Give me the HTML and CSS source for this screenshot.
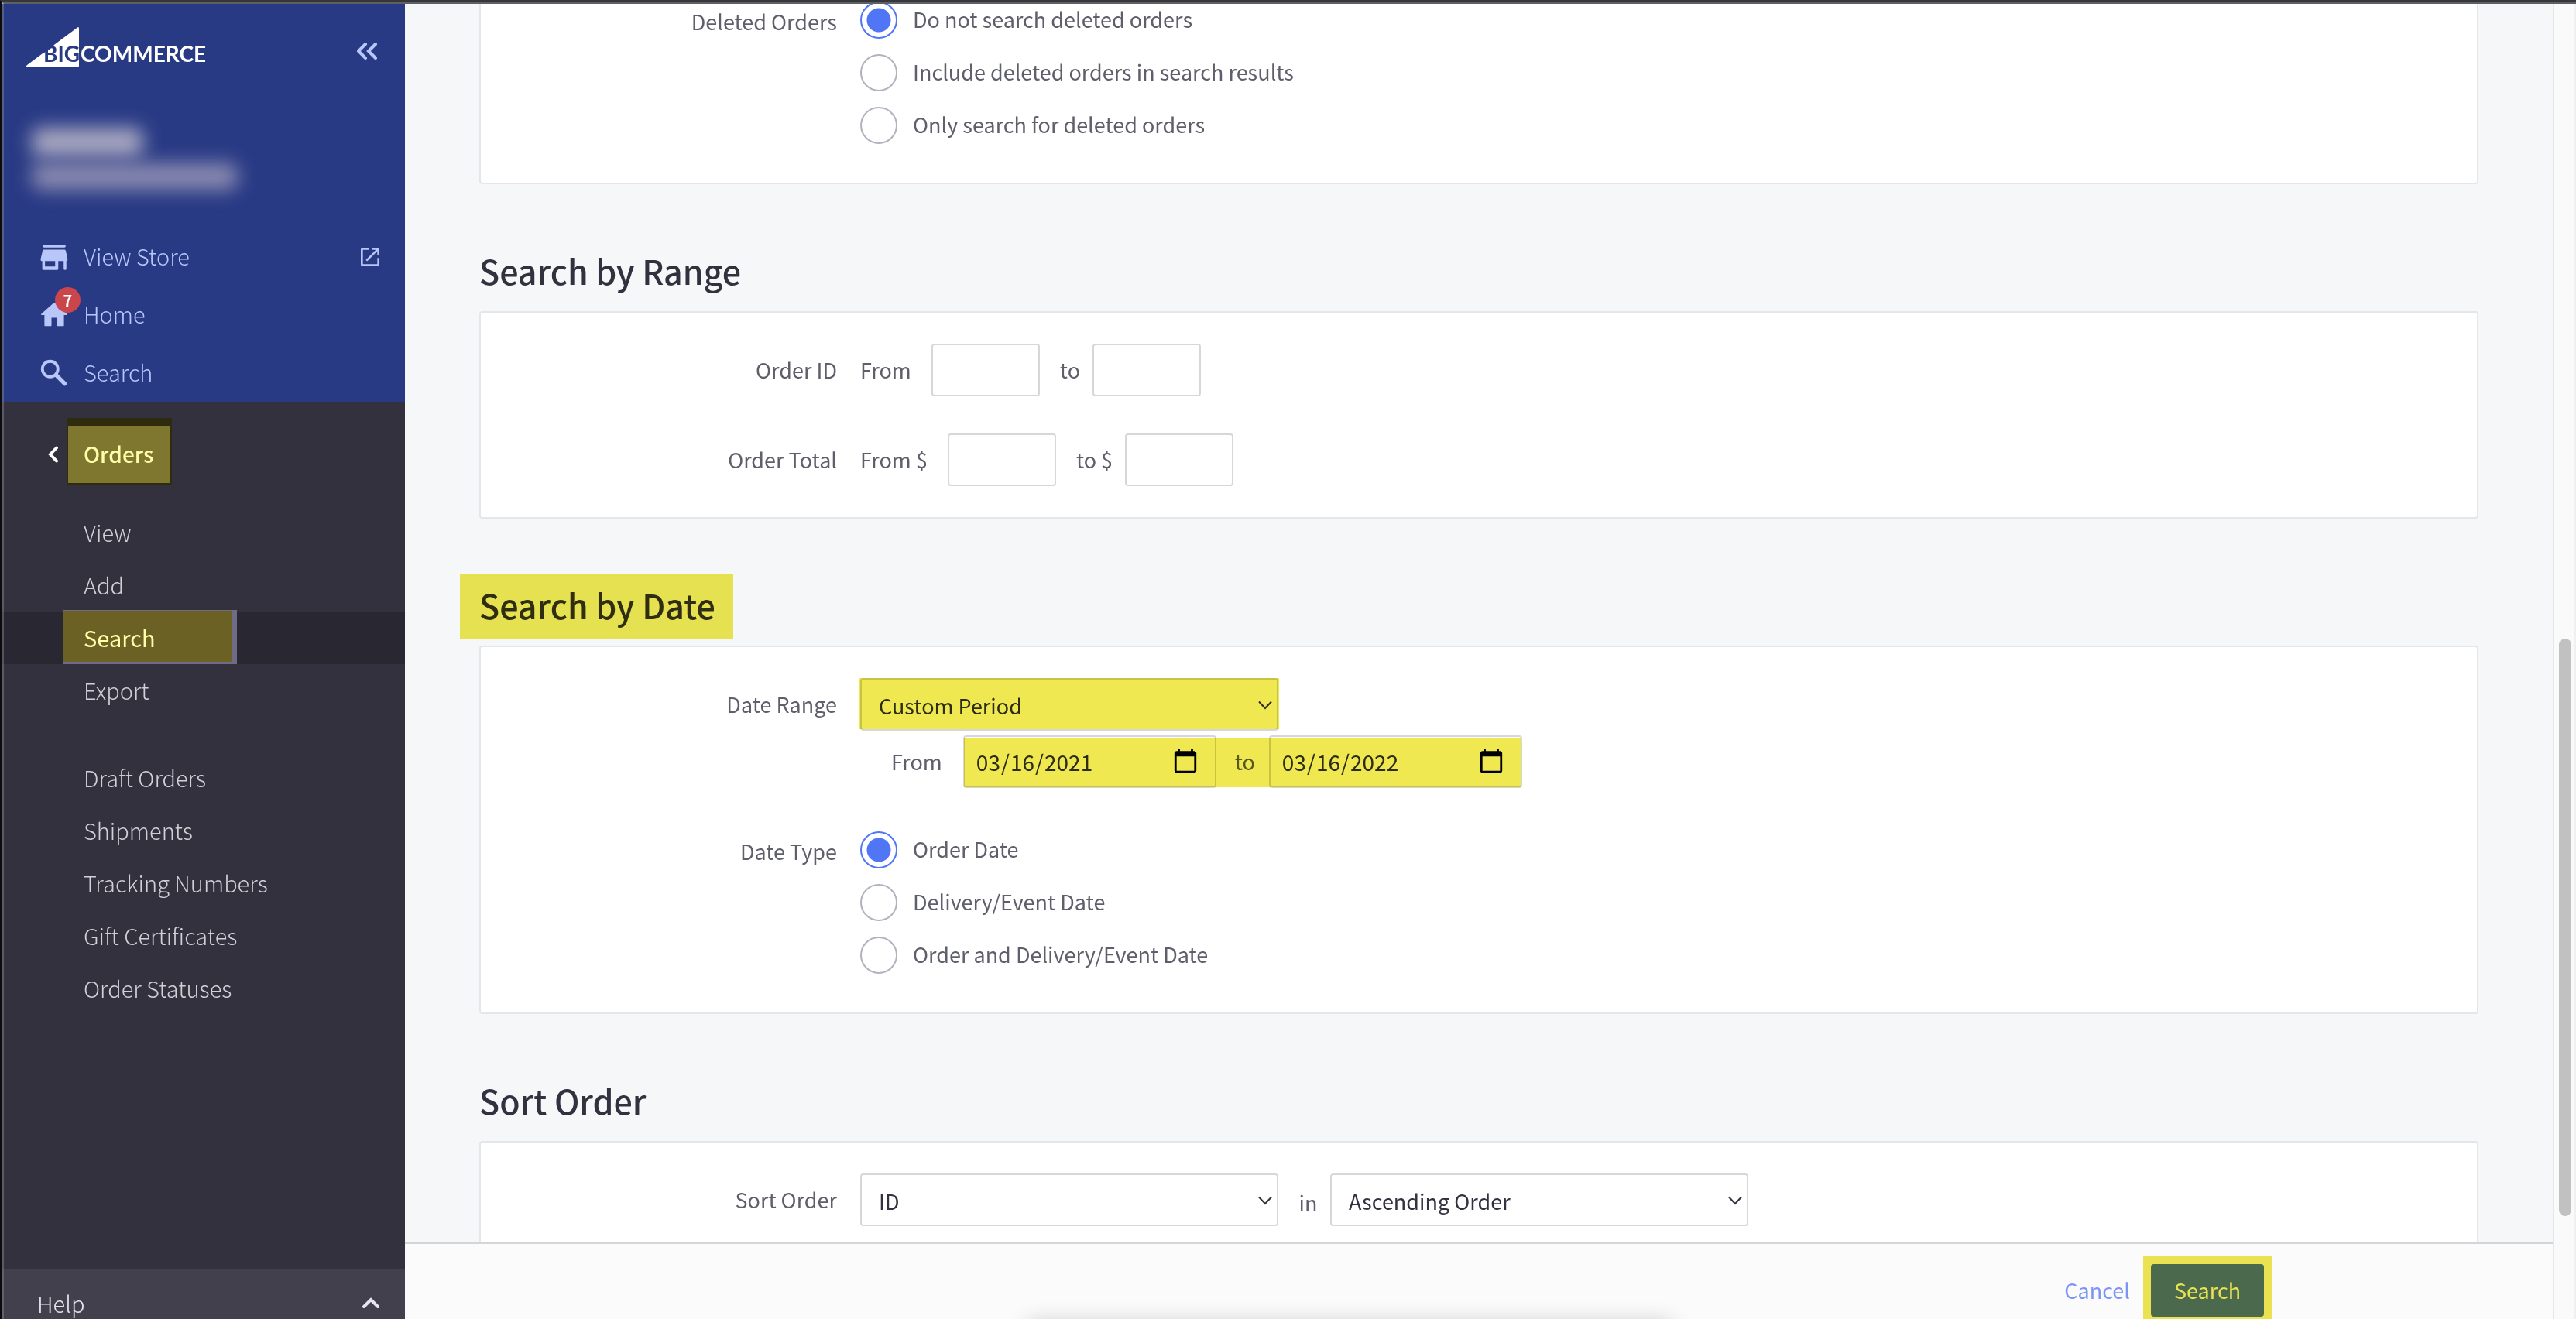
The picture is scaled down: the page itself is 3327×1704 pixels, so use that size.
FILE: index.html
```html
<!DOCTYPE html>
<html lang="en">
<head>
    <meta charset="UTF-8">
    <meta name="viewport" content="width=device-width, initial-scale=1.0">
    <title>Search Orders</title>
    <link rel="stylesheet" href="styles.css">
</head>
<body>
<div class="window">
    <aside class="sidebar">
        <div class="sidebar-top">
            <div class="brand">
                <svg class="logo" width="236" height="52" viewBox="0 0 236 52" role="img" aria-label="BigCommerce">
                    <path d="M67 0.6 L2 49 Q-1 52 3 52 H67 Q69 52 69 50 V2 Q69 -1 67 0.6 Z" fill="#fff"/>
                    <path d="M22 32 L36 23" stroke="#293a85" stroke-width="4"/>
                    <text class="logo-big" x="23" y="45">BIG</text>
                    <text class="logo-text" x="71" y="45">COMMERCE</text>
                </svg>
                <button class="icon-button" aria-label="Collapse menu">
                    <svg width="26" height="22" viewBox="0 0 26 22"><path d="M11 2 L2 11 L11 20 M24 2 L15 11 L24 20" fill="none" stroke="#b9c6fa" stroke-width="4" stroke-linecap="round"/></svg>
                </button>
            </div>
            <div class="store">
                <div class="store-name"></div>
                <div class="store-plan"></div>
            </div>
            <nav>
                <a class="nav-link" href="#">
                    <svg class="nav-icon" viewBox="0 0 24 24"><path d="M4.500 3h15a.8.8 0 0 1 0 2h-15a.8.8 0 0 1 0-2zM20.600 7.500q-.1-.9-1-.9H4.400q-.9 0-1 .9L2 13.500q-.2 1.500 1.200 1.500v5.700q0 .9.900.9h10q.9 0 .9-.9V15h4v5.900q.1.700 1 .7t1-.7V15q1.100-.1.900-1.500zM12.700 19H5.200v-4h7.500z"/></svg>
                    <span>View Store</span>
                    <svg class="nav-external" viewBox="0 0 24 24"><path d="M19 19H5V5h6V3H5a2 2 0 0 0-2 2v14a2 2 0 0 0 2 2h14a2 2 0 0 0 2-2v-6h-2v6zM14 3v2h3.600l-9.800 9.800 1.400 1.400L19 6.400V10h2V3h-7z"/></svg>
                </a>
                <a class="nav-link" href="#">
                    <svg class="nav-icon" viewBox="0 0 24 24"><path d="M10 19.500v-5.500h4v5.500q0 .7.700.7h3.800q.7 0 .7-.7V12h2q1-.1.300-.9l-9-8q-.5-.4-1 0l-9 8q-.7.800.300.900h2v7.500q0 .7.700.7h3.800q.7 0 .7-.7z"/></svg>
                    <span>Home</span>
                    <span class="badge">7</span>
                </a>
                <a class="nav-link" href="#">
                    <svg class="nav-icon" viewBox="0 0 24 24"><circle cx="9" cy="9" r="5.700" fill="none" stroke="#b9c6fa" stroke-width="2.200"/><path d="M13.500 13.500 L19.800 19.800" stroke="#b9c6fa" stroke-width="3" stroke-linecap="round"/></svg>
                    <span>Search</span>
                </a>
            </nav>
        </div>
        <div class="section-head">
            <button class="back-button" aria-label="Back">
                <svg width="14" height="22" viewBox="0 0 14 22"><path d="M11 2.500 L3 11 L11 19.500" fill="none" stroke="#fff" stroke-width="4" stroke-linecap="round"/></svg>
            </button>
            <a class="section-title" href="#">Orders</a>
        </div>
        <ul class="sub-nav">
            <li><a href="#">View</a></li>
            <li><a href="#">Add</a></li>
            <li class="active"><a href="#">Search</a></li>
            <li><a href="#">Export</a></li>
        </ul>
        <ul class="sub-nav">
            <li><a href="#">Draft Orders</a></li>
            <li><a href="#">Shipments</a></li>
            <li><a href="#">Tracking Numbers</a></li>
            <li><a href="#">Gift Certificates</a></li>
            <li><a href="#">Order Statuses</a></li>
        </ul>
        <button class="help">
            Help
            <svg width="24" height="16" viewBox="0 0 24 16"><path d="M3 13 L12 4 L21 13" fill="none" stroke="#e4e6ee" stroke-width="4" stroke-linecap="round"/></svg>
        </button>
    </aside>

    <form class="main">
        <div class="scroll-area">
            <section class="panel panel-first">
                <div class="row row-radios" role="radiogroup" aria-labelledby="deleted-label">
                    <span class="row-label" id="deleted-label">Deleted Orders</span>
                    <div>
                        <label class="radio"><input type="radio" name="deleted" checked>Do not search deleted orders</label>
                        <label class="radio"><input type="radio" name="deleted">Include deleted orders in search results</label>
                        <label class="radio"><input type="radio" name="deleted">Only search for deleted orders</label>
                    </div>
                </div>
            </section>

            <h2>Search by Range</h2>
            <section class="panel">
                <div class="row">
                    <span class="row-label">Order ID</span>
                    <div class="fields">
                        <label for="id-from">From</label>
                        <input class="box" id="id-from" type="text">
                        <label class="to" for="id-to">to</label>
                        <input class="box" id="id-to" type="text">
                    </div>
                </div>
                <div class="row">
                    <span class="row-label">Order Total</span>
                    <div class="fields">
                        <label for="total-from">From $</label>
                        <input class="box" id="total-from" type="text">
                        <label class="to" for="total-to">to $</label>
                        <input class="box" id="total-to" type="text">
                    </div>
                </div>
            </section>

            <h2><mark>Search by Date</mark></h2>
            <section class="panel">
                <div class="row">
                    <label class="row-label" for="date-range">Date Range</label>
                    <div>
                        <div class="select marked">
                            <select class="box" id="date-range"><option>Custom Period</option></select>
                            <svg class="arrow" width="18" height="12" viewBox="0 0 18 12"><path d="M1 1.500 L9 10 L17 1.500"/></svg>
                        </div>
                        <div class="dates">
                            <label for="date-from">From</label>
                            <div class="date-pair marked">
                                <input class="box" id="date-from" type="date" value="2021-03-16">
                                <label for="date-to">to</label>
                                <input class="box" id="date-to" type="date" value="2022-03-16">
                            </div>
                        </div>
                    </div>
                </div>
                <div class="row row-radios" role="radiogroup" aria-labelledby="type-label">
                    <span class="row-label" id="type-label">Date Type</span>
                    <div>
                        <label class="radio"><input type="radio" name="type" checked>Order Date</label>
                        <label class="radio"><input type="radio" name="type">Delivery/Event Date</label>
                        <label class="radio"><input type="radio" name="type">Order and Delivery/Event Date</label>
                    </div>
                </div>
            </section>

            <h2>Sort Order</h2>
            <section class="panel">
                <div class="row">
                    <label class="row-label" for="sort-field">Sort Order</label>
                    <div class="sorting">
                        <div class="select">
                            <select class="box" id="sort-field"><option>ID</option></select>
                            <svg class="arrow" width="18" height="12" viewBox="0 0 18 12"><path d="M1 1.500 L9 10 L17 1.500"/></svg>
                        </div>
                        <label for="sort-direction">in</label>
                        <div class="select">
                            <select class="box" id="sort-direction"><option>Ascending Order</option></select>
                            <svg class="arrow" width="18" height="12" viewBox="0 0 18 12"><path d="M1 1.500 L9 10 L17 1.500"/></svg>
                        </div>
                    </div>
                </div>
            </section>
        </div>
        <footer class="actions">
            <a class="cancel" href="#">Cancel</a>
            <div class="submit"><button type="submit">Search</button></div>
        </footer>
    </form>
    <div class="scrollbar"><div class="thumb"></div></div>
</div>
</body>
</html>
```
FILE: styles.css
```css
*, *::before, *::after {
    box-sizing: border-box;
}

body {
    margin: 0;
    font-family: "Noto Sans CJK SC", "Open Sans", sans-serif;
    font-size: 27px;
    line-height: 68px;
    color: #5e5f6b;
    background-color: #36373a;
}

button, input, select {
    font: inherit;
    color: inherit;
    margin: 0;
}

button {
    border: 0;
    padding: 0;
    background: none;
}

a {
    color: inherit;
    text-decoration: none;
}

h2 {
    margin: 0;
    height: 164px;
    padding-top: 76px;
    line-height: 70px;
    font-size: 43px;
    font-weight: 500;
    color: #313140;
}

mark {
    display: inline-block;
    height: 84px;
    margin: -5px 0 0 -25px;
    padding: 5px 23px 0 25px;
    background-color: #e6e150;
    color: #302e10;
}

.window {
    display: flex;
    height: 100vh;
    border-top: 3px solid #36373a;
    border-left: 3px solid #0c0c0e;
    overflow: hidden;
    position: relative;
    background-color: #f6f7f9;
    padding-top: 2px;
}

/* light edge of the window frame */
.window::before {
    content: "";
    position: absolute;
    inset: 0;
    border-top: 2px solid #5f6064;
    border-left: 2px solid rgba(130, 130, 140, 0.5);
    z-index: 2;
    pointer-events: none;
}

/* sidebar */

.sidebar {
    flex: none;
    width: 520px;
    padding-left: 2px;
    display: flex;
    flex-direction: column;
    background-color: #34313f;
    color: #d0d0d6;
    font-size: 29px;
    font-weight: 300;
}

.sidebar-top {
    margin-left: -2px;
    padding-left: 2px;
    background-color: #293a85;
    color: #b9c6fa;
}

.brand {
    display: flex;
    justify-content: space-between;
    align-items: flex-start;
    height: 142px;
    padding: 30px 36px 0 28px;
}

.logo text {
    font-family: Lato, sans-serif;
    font-weight: 700;
    font-size: 28px;
}

.logo-text {
    fill: #fff;
}

.logo-big {
    fill: #293a85;
}

.icon-button {
    display: flex;
    padding-top: 20px;
}

.store {
    height: 147px;
    padding: 18px 36px;
}

.store-name, .store-plan {
    border-radius: 12px;
    filter: blur(12px);
}

.store-name {
    width: 144px;
    height: 38px;
    background-color: #a9a8c1;
}

.store-plan {
    width: 266px;
    height: 34px;
    margin-top: 8px;
    background-color: #8c8cb1;
}

.nav-link {
    display: flex;
    align-items: center;
    gap: 17px;
    height: 75px;
    padding: 0 29px 0 44px;
    position: relative;
}

.nav-link > span {
    padding-bottom: 4px;
}

.nav-icon {
    width: 42px;
    height: 42px;
    fill: #b9c6fa;
}

.nav-external {
    width: 32px;
    height: 32px;
    margin-left: auto;
    fill: #b9c6fa;
}

.badge {
    position: absolute;
    left: 66px;
    top: 2px;
    width: 33px;
    height: 33px;
    border-radius: 50%;
    background-color: #cb464b;
    color: #fff;
    font-size: 20px;
    font-weight: 700;
    line-height: 33px;
    text-align: center;
}

.section-head {
    display: flex;
    align-items: center;
    padding: 21px 0 27px 57px;
    font-size: 28px;
}

.back-button {
    display: flex;
    width: 25px;
    padding-top: 7px;
}

.section-title {
    height: 87px;
    padding: 0 22px 0 20px;
    line-height: 72px;
    border: solid #2f2b0f;
    border-width: 10px 2px 3px 1px;
    background-color: #7f772f;
    color: #ffffa8;
    font-weight: 500;
}

.sub-nav {
    list-style: none;
    margin: 0 0 45px -2px;
    padding: 0;
}

.sub-nav a {
    display: block;
    height: 68px;
    line-height: 66px;
    padding-left: 105px;
}

.sub-nav .active {
    position: relative;
    z-index: 0;
    background-color: #292731;
    color: #ffffa8;
    font-weight: 400;
}

.sub-nav .active::before {
    content: "";
    position: absolute;
    left: 79px;
    top: -2px;
    bottom: 0;
    width: 224px;
    border: solid #706c88;
    border-width: 1px 6px 3px 0;
    background-color: #6b6124;
    z-index: -1;
}

.help {
    display: flex;
    justify-content: space-between;
    align-items: flex-start;
    height: 64px;
    margin: auto 0 0 -2px;
    padding: 0 32px 0 45px;
    line-height: 86px;
    background-color: #43404d;
    color: #e4e6ee;
    overflow: hidden;
}

.help svg {
    margin-top: 35px;
}

/* content */

.main {
    flex: 1;
    min-width: 0;
    display: flex;
    flex-direction: column;
    position: relative;
}

.scroll-area {
    flex: 1;
    min-height: 0;
    overflow: hidden;
    padding: 0 96px;
}

.panel {
    border: 2px solid #e4e6ec;
    border-radius: 4px;
    background-color: #fff;
    padding: 40px 0;
}

/* scrolled partly out of view */
.panel-first {
    margin-top: -55px;
}

.row {
    display: grid;
    grid-template-columns: 460px 1fr;
    column-gap: 30px;
}

.row + .row {
    margin-top: 48px;
}

.row + .row-radios {
    margin-top: 46px;
}

.row-label {
    text-align: right;
}

.row-radios .row-label {
    padding-top: 2px;
}

.radio {
    display: flex;
    align-items: center;
    gap: 20px;
    height: 68px;
    padding-bottom: 2px;
}

.radio input {
    appearance: none;
    position: relative;
    top: 1px;
    width: 48px;
    height: 48px;
    border: 2px solid #b0b3be;
    border-radius: 50%;
    background-color: #fff;
}

.radio input:checked {
    border-color: #5075f5;
    background: radial-gradient(circle, #5075f5 15px, #fff 16px);
}

.box {
    height: 68px;
    border: 2px solid #d6d7d9;
    border-radius: 4px;
    background-color: #fff;
    color: #313140;
}

.fields {
    display: flex;
}

.fields .box {
    width: 140px;
    margin-left: 26px;
}

.fields .to {
    margin-left: 26px;
}

.fields .to + .box {
    margin-left: 16px;
}

.select {
    position: relative;
    width: 540px;
    height: 68px;
}

.select select {
    display: block;
    appearance: none;
    width: 100%;
    padding: 0 50px 6px 22px;
}

.arrow {
    position: absolute;
    right: 8px;
    top: 29px;
    fill: none;
    stroke: #313140;
    stroke-width: 2;
}

.marked {
    position: relative;
}

/* highlighter over the fields */
.marked::after {
    content: "";
    position: absolute;
    inset: 0 -1px 2px -1px;
    background-color: #efe850;
    mix-blend-mode: multiply;
    pointer-events: none;
}

.dates {
    display: flex;
    gap: 27px;
    margin-top: 6px;
    padding-left: 40px;
}

.date-pair {
    display: flex;
}

.date-pair::after {
    inset: 4px 1px 1px 1px;
}

.date-pair .box {
    width: 327px;
    padding: 0 20px 0 14px;
    font-size: 28px;
}

.date-pair .box::-webkit-calendar-picker-indicator {
    width: 36px;
    height: 36px;
    padding: 0;
}

.date-pair label {
    width: 68px;
    padding-left: 6px;
    text-align: center;
}

.sorting {
    display: flex;
}

.sorting label {
    width: 67px;
    padding: 4px 0 0 10px;
    text-align: center;
}

.actions {
    display: flex;
    justify-content: flex-end;
    height: 99px;
    padding: 16px 363px 0 0;
    border-top: 2px solid #d3d5d9;
    background-color: #fbfbfb;
    overflow: hidden;
    position: relative;
}

/* shadow cast from below the window */
.actions::after {
    content: "";
    position: absolute;
    left: 29%;
    right: 41%;
    bottom: -40px;
    height: 36px;
    box-shadow: 0 0 28px rgba(0, 0, 0, 0.2);
}

.cancel {
    padding: 10px 17px 0 0;
    color: #7a94f8;
}

.submit {
    flex: none;
    height: 88px;
    padding: 10px;
    background-color: #eae250;
}

.submit button {
    display: block;
    width: 146px;
    height: 68px;
    border-radius: 4px;
    background-color: #4b6a4d;
    color: #eae250;
}

.scrollbar {
    flex: none;
    width: 30px;
    border-left: 2px solid #e7e7e8;
    border-right: 2px solid #f0f0f0;
    background-color: #fafafa;
    padding: 820px 4px 0 6px;
}

.thumb {
    height: 746px;
    border-radius: 8px;
    background-color: #c1c1c1;
}
```
